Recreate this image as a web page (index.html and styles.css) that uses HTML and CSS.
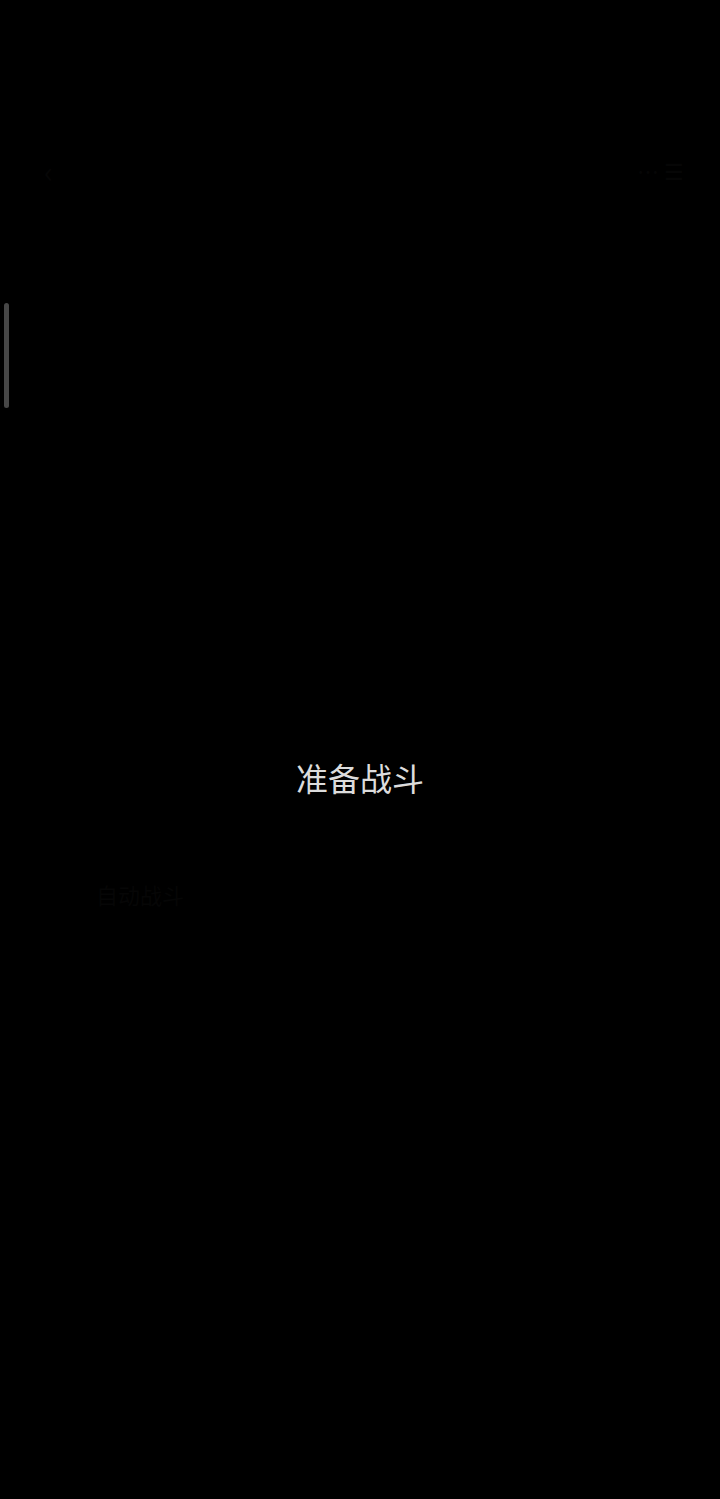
FILE: index.html
```html
<!DOCTYPE html>
<html lang="zh-CN">
<head>
<meta charset="utf-8">
<title>准备战斗</title>
<link rel="stylesheet" href="styles.css">
</head>
<body>
<div class="screen">
  <header class="topbar">
    <span class="faint back">‹</span>
    <span class="faint icons">⋯ ☰</span>
  </header>
  <main class="stage">
    <div class="ready">准备战斗</div>
    <div class="faint auto">自动战斗</div>
  </main>
  <div class="scroll-thumb"></div>
</div>
</body>
</html>
```
FILE: styles.css
```css
html, body {
  margin: 0;
  padding: 0;
  background: #000;
}
body {
  font-family: "Noto Sans CJK SC", "Noto Sans", sans-serif;
}
.screen {
  position: relative;
  width: 720px;
  height: 1499px;
  overflow: hidden;
  background: #000;
}
.topbar {
  display: flex;
  justify-content: space-between;
  align-items: center;
  padding: 150px 36px 0 44px;
  height: 40px;
}
.faint {
  color: #060606;
}
.back {
  font-size: 30px;
}
.icons {
  font-size: 22px;
}
.stage {
  display: flex;
  flex-direction: column;
  padding-top: 567px;
}
.ready {
  text-align: center;
  font-size: 32px;
  line-height: 40px;
  color: #dcdcdc;
}
.auto {
  margin: 82px 0 0 96px;
  font-size: 22px;
  line-height: 30px;
}
.scroll-thumb {
  position: absolute;
  left: 4px;
  top: 303px;
  width: 5px;
  height: 105px;
  border-radius: 3px;
  background: #474747;
}
```
